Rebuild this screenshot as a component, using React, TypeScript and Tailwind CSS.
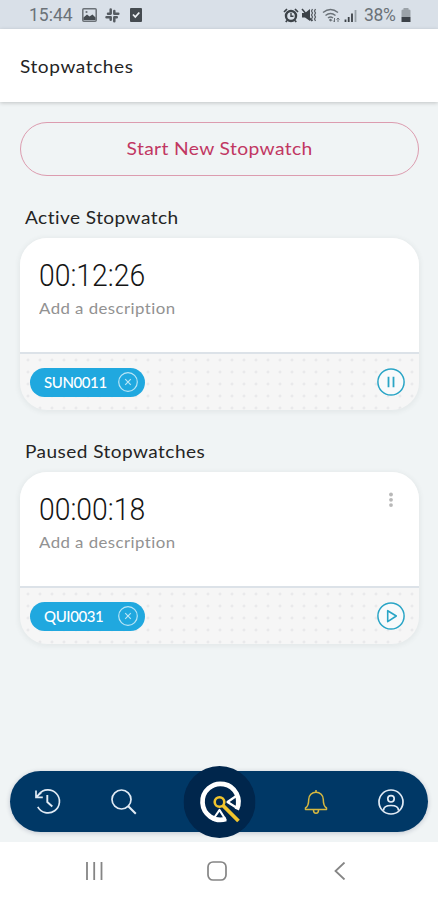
import type { ReactNode } from 'react';

type Stopwatch = {
  time: string;
  tag: string;
  running: boolean;
};

const active: Stopwatch = { time: '00:12:26', tag: 'SUN0011', running: true };
const paused: Stopwatch = { time: '00:00:18', tag: 'QUI0031', running: false };

function StatusBar() {
  return (
    <div className="flex h-[29px] items-center justify-between bg-[#d9e0e8] pt-px pr-[27px] pl-[29px] font-[Roboto,sans-serif] text-[17.5px] text-[#6b7278]">
      <div className="flex items-center">
        <span className="w-[53px]">15:44</span>
        <svg width="15" height="14" viewBox="0 0 15 14">
          <rect x="0.8" y="0.8" width="13.4" height="12.4" rx="1" fill="none" stroke="#6b7177" strokeWidth="1.5" />
          <path d="M1.500 12V9.500L5 6.500l2.500 2 3-2 3 3V12Z" fill="#454b50" />
          <circle cx="4.500" cy="4" r="1.100" fill="#6b7177" />
        </svg>
        <svg width="15" height="15" viewBox="0 0 15 15" className="ml-[8px]" stroke="#555b61" strokeWidth="2.500" strokeLinecap="round">
          <path d="M5.700 1.500v4M9.300 3v2.500M3 5.700h2.500M9.300 5.700h4M1.500 9.300h4M5.700 9.300v2.500M9.300 9.300v4M9.300 9.300h2.500" />
        </svg>
        <svg width="12" height="14" viewBox="0 0 12 14" className="ml-[10px]">
          <rect width="12" height="14" rx="1" fill="#454b50" />
          <path d="m3 6.500 2.300 2.500L9.300 4.500" fill="none" stroke="#eef2f5" strokeWidth="1.800" />
        </svg>
      </div>
      <div className="flex items-center">
        <svg width="16" height="15" viewBox="0 0 16 15" fill="none" stroke="#3c4248">
          <circle cx="8" cy="8" r="5" strokeWidth="2.400" />
          <path d="M8 5v3.300h2.500" strokeWidth="1.400" />
          <path d="M1 4 4 1M15 4l-3-3M4 12.500 2.800 14M12 12.500l1.200 1.500" strokeWidth="1.700" />
        </svg>
        <svg width="16" height="14" viewBox="0 0 16 14" className="ml-[2px]">
          <path d="M1 5h3l5-4v12L4 9.500H1Z" fill="#3c4248" />
          <path d="m1 1 10 12" stroke="#3c4248" strokeWidth="1.500" />
          <path d="m11.500 1-1 2 1 2-1 2 1 2-1 2 1 2M14.500 1l-1 2 1 2-1 2 1 2-1 2 1 2" stroke="#555b61" fill="none" strokeWidth="1.200" />
        </svg>
        <svg width="19" height="15" viewBox="0 0 19 15" className="ml-[5px]" fill="none" stroke="#6b7278" strokeWidth="1.500">
          <path d="M1 4.500q7.500-6 15 0M3.500 7.500q5-4 10 0M6 10q2.500-2 5 0" />
          <path d="m8.500 12 .1.100" strokeWidth="2.500" strokeLinecap="round" />
          <path d="M12.500 10v4M11 12.500l1.500 1.500M16 14v-4M14.500 11.500 16 10l1.500 1.500" strokeWidth="1" />
        </svg>
        <svg width="13" height="13" viewBox="0 0 13 13" className="ml-[3px]" strokeWidth="1.800">
          <path d="M1.500 13v-2.500M4.700 13V8M8 13V4.500" stroke="#3c4248" />
          <path d="M11.500 13V1" stroke="#9aa2a9" />
        </svg>
        <span className="ml-[7px] w-[35px] tracking-[-0.3px]">38%</span>
        <svg width="10" height="14" viewBox="0 0 9 14" className="ml-[2px]">
          <path d="M0 2.500Q0 1.500 2 1.500V0h5v1.500q2 0 2 1V9H0Z" fill="#9ba2a8" />
          <path d="M0 9h9v5H0Z" fill="#3c4248" />
        </svg>
      </div>
    </div>
  );
}

function SectionTitle({ children }: { children: ReactNode }) {
  return (
    <h2 className="mt-[30px] mb-[8px] origin-left scale-x-[1.12] pl-[4.500px] text-[17px] leading-[24px] tracking-[0.4px]">
      {children}
    </h2>
  );
}

function Tag({ label }: { label: string }) {
  return (
    <div className="mt-px flex h-[29px] w-[115px] items-center justify-between rounded-full bg-[#20a8df] pr-[7px] pl-[14px] text-white">
      <span className="w-[62px] text-[15px] font-medium tracking-[-0.4px] whitespace-nowrap">{label}</span>
      <svg width="20" height="20" viewBox="0 0 20 20" fill="none" stroke="#b9e5f6">
        <circle cx="10" cy="10" r="9.300" strokeWidth="1.200" />
        <path d="m7.200 7.200 5.600 5.600M12.800 7.200l-5.600 5.600" strokeWidth="1.200" />
      </svg>
    </div>
  );
}

function StopwatchCard({ stopwatch }: { stopwatch: Stopwatch }) {
  return (
    <div className="h-[172px] overflow-hidden rounded-[27px] bg-[#f6f6f6] shadow-[0_1px_4px_2px_rgba(70,80,80,0.06)]">
      <div className="flex h-[116px] justify-between border-b-2 border-[#dce2e8] bg-white pr-[25px] pl-[19px]">
        <div>
          <div className="mt-[17px] origin-left scale-x-[0.885] font-[Roboto,sans-serif] text-[32px] leading-[40px] font-light whitespace-nowrap text-[#151515]">
            {stopwatch.time}
          </div>
          <div className="mt-[3px] origin-left scale-x-[1.12] text-[15px] leading-[20px] tracking-[0.4px] whitespace-nowrap text-[#929292]">
            Add a description
          </div>
        </div>
        {!stopwatch.running && (
          <svg width="6" height="16" viewBox="0 0 6 16" className="mt-[20px]" fill="#b8b8b8">
            <circle cx="3" cy="2.500" r="1.900" />
            <circle cx="3" cy="7.800" r="1.900" />
            <circle cx="3" cy="13.100" r="1.900" />
          </svg>
        )}
      </div>
      <div className="flex h-[56px] items-center justify-between bg-[radial-gradient(circle,#e9e9eb_1px,transparent_1.8px)] bg-size-[12px_12px] bg-position-[2px_0px] pr-[14px] pb-px pl-[10px]">
        <Tag label={stopwatch.tag} />
        <svg width="28" height="28" viewBox="0 0 28 28" fill="none" stroke="#2aa5c6">
          <circle cx="14" cy="14" r="13.100" strokeWidth="1.500" fill="#f8fafb" />
          {stopwatch.running ? (
            <path d="M11.500 8.700v10.500M16.500 8.700v10.500" strokeWidth="1.800" />
          ) : (
            <path d="M10.700 8.700v11L19.300 14Z" strokeWidth="1.600" strokeLinejoin="round" />
          )}
        </svg>
      </div>
    </div>
  );
}

function Logo() {
  return (
    <svg width="72" height="72" viewBox="0 0 72 72" fill="none" className="-translate-x-[1.5px]">
      <circle cx="36" cy="36" r="36" fill="#00264c" />
      <path d="M53.300 43.500A18 18 0 1 0 42.500 53" stroke="#fff" strokeWidth="4.700" />
      <path d="m44 36 9.500-6.500v12.500ZM36 44l-6.500 9.500h12.500Z" stroke="#fff" strokeWidth="2.200" strokeLinejoin="round" />
      <circle cx="36" cy="36" r="4.800" stroke="#f0c52d" strokeWidth="2.600" />
      <path d="m39.500 39.500 15.500 15.500" stroke="#f0c52d" strokeWidth="3.800" />
    </svg>
  );
}

function BottomBar() {
  return (
    <div className="mx-[10px] flex h-[61px] items-center justify-between rounded-full bg-[#003866] px-[24px] shadow-[0_1px_5px_rgba(0,20,60,0.2)]">
      <div className="flex items-center gap-[49px]">
        <svg width="27" height="27" viewBox="0 0 27 27" fill="none" stroke="#e1ebf5" strokeWidth="1.700">
          <path d="M3.800 18.800A11.500 11.500 0 1 0 5 6.200" />
          <path d="M2 2.500v6.800h6.800M2.200 9l5-4.500" />
          <path d="M13.300 7v7l5 4.500" strokeWidth="1.900" />
        </svg>
        <svg width="27" height="27" viewBox="0 0 27 27" fill="none" stroke="#e1ebf5" strokeWidth="1.700">
          <circle cx="11.500" cy="11.500" r="9.500" />
          <path d="m18.300 18.300 7.500 7.500" strokeWidth="2" />
        </svg>
      </div>
      <Logo />
      <div className="flex items-center gap-[50px]">
        <svg width="24" height="26" viewBox="0 0 24 26" fill="none" stroke="#d6b840" strokeWidth="1.500" strokeLinejoin="round">
          <path d="M1.500 20.500v-1.500C4 17.500 4.700 15 4.700 10.500a7.300 7.300 0 0 1 14.600 0c0 4.500.7 7 3.200 8.500v1.500Z" />
          <path d="M12 3V1M9.500 21a2.500 3.300 0 0 0 5 0" />
        </svg>
        <svg width="26" height="26" viewBox="0 0 26 26" fill="none" stroke="#e1ebf5" strokeWidth="1.700">
          <circle cx="13" cy="13" r="12" />
          <circle cx="13" cy="9.800" r="3.200" />
          <path d="M5.500 21.500c0-3.500 3.500-5 7.500-5s7.500 1.500 7.500 5" />
        </svg>
      </div>
    </div>
  );
}

function AndroidNav() {
  return (
    <div className="flex h-[58px] items-center gap-[104px] bg-white pl-[85px]">
      <svg width="18" height="18" viewBox="0 0 18 18" stroke="#858585" strokeWidth="1.800">
        <path d="M2 0v18M9.200 0v18M16.500 0v18" />
      </svg>
      <svg width="20" height="20" viewBox="0 0 20 20" fill="none" stroke="#858585" strokeWidth="1.700">
        <rect x="1" y="1" width="18" height="18" rx="5" />
      </svg>
      <svg width="12" height="18" viewBox="0 0 12 18" fill="none" stroke="#858585" strokeWidth="1.800" className="ml-[3px]">
        <path d="M10.500 0.500 1.500 9l9 8.500" />
      </svg>
    </div>
  );
}

export default function App() {
  return (
    <div className="flex h-[900px] w-[438px] flex-col overflow-hidden bg-[#f0f4f5] font-[Lato,sans-serif] text-[#242424]">
      <StatusBar />
      <header className="z-10 flex h-[73px] items-center bg-white pl-[20px] shadow-[0_1px_4px_rgba(0,0,0,0.2)]">
        <h1 className="mt-[2px] origin-left scale-x-[1.12] text-[17px] tracking-[0.53px]">Stopwatches</h1>
      </header>
      <main className="flex-1 pt-[20px] pr-[19px] pl-[20px]">
        <button className="flex h-[54px] w-full items-center justify-center rounded-full border border-[#dc9caf] text-[#c13762]">
          <span className="mt-px scale-x-[1.1] text-[17.5px] tracking-[0.33px] whitespace-nowrap">Start New Stopwatch</span>
        </button>
        <SectionTitle>Active Stopwatch</SectionTitle>
        <StopwatchCard stopwatch={active} />
        <SectionTitle>Paused Stopwatches</SectionTitle>
        <StopwatchCard stopwatch={paused} />
      </main>
      <div className="pb-[10px]">
        <BottomBar />
      </div>
      <AndroidNav />
    </div>
  );
}
